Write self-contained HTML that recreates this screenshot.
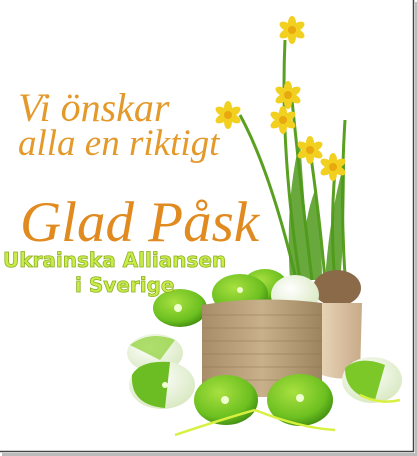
<!DOCTYPE html>
<html><head><style>
html,body{margin:0;padding:0;background:#fff;}
body{width:417px;height:456px;overflow:hidden;position:relative;}
.t{position:absolute;font-family:"Liberation Serif",serif;font-style:italic;color:#e49a2a;white-space:nowrap;}
.g{position:absolute;font-family:"DejaVu Sans",sans-serif;font-weight:bold;color:#c8ec4a;white-space:nowrap;-webkit-text-stroke:0.8px #8cb020;}
</style></head><body>
<svg width="417" height="456" style="position:absolute;left:0;top:0">
<defs>
<radialGradient id="eg" cx="0.4" cy="0.35" r="0.7"><stop offset="0" stop-color="#a8e040"/><stop offset="0.7" stop-color="#6cc020"/><stop offset="1" stop-color="#3f8a10"/></radialGradient>
<radialGradient id="ew" cx="0.4" cy="0.35" r="0.7"><stop offset="0" stop-color="#ffffff"/><stop offset="1" stop-color="#d8e8c0"/></radialGradient>
<linearGradient id="bk" x1="0" x2="1"><stop offset="0" stop-color="#a88e68"/><stop offset="0.5" stop-color="#c8b08a"/><stop offset="1" stop-color="#9c845e"/></linearGradient>
<linearGradient id="pt" x1="0" x2="1"><stop offset="0" stop-color="#e8d4b8"/><stop offset="1" stop-color="#c8ab88"/></linearGradient>
<g id="fl"><g fill="#f2d020"><ellipse cx="0" cy="-7" rx="4" ry="7"/><ellipse cx="0" cy="-7" rx="4" ry="7" transform="rotate(60)"/><ellipse cx="0" cy="-7" rx="4" ry="7" transform="rotate(120)"/><ellipse cx="0" cy="-7" rx="4" ry="7" transform="rotate(180)"/><ellipse cx="0" cy="-7" rx="4" ry="7" transform="rotate(240)"/><ellipse cx="0" cy="-7" rx="4" ry="7" transform="rotate(300)"/></g><circle r="4" fill="#e8a810"/></g>
</defs>
<rect x="0" y="0" width="413" height="451" fill="#fff"/>
<line x1="413.5" y1="0" x2="413.5" y2="452" stroke="#444" stroke-width="1.5"/>
<line x1="0" y1="451.5" x2="414" y2="451.5" stroke="#444" stroke-width="1.5"/>
<rect x="415" y="2" width="2" height="454" fill="#bbb"/><rect x="2" y="453" width="415" height="3" fill="#bbb"/>
<g stroke="#5aa020" stroke-width="3" fill="none">
<path d="M285 40 Q280 150 300 280"/><path d="M292 100 Q300 180 312 280"/><path d="M240 115 Q270 170 295 275"/>
<path d="M335 170 Q330 230 335 280"/><path d="M310 150 Q320 220 325 280"/><path d="M345 120 Q340 200 345 275"/>
</g>
<g fill="#4f9a1c" opacity="0.85">
<path d="M290 280 Q285 200 300 140 Q305 210 310 280Z"/><path d="M325 280 Q330 210 345 160 Q345 230 340 280Z"/><path d="M305 280 Q300 230 315 190 Q322 240 322 280Z"/>
</g>
<use href="#fl" x="292" y="30"/><use href="#fl" x="288" y="95"/><use href="#fl" x="283" y="120"/><use href="#fl" x="333" y="167"/><use href="#fl" x="310" y="150"/><use href="#fl" x="228" y="115"/>
<ellipse cx="337" cy="288" rx="24" ry="18" fill="#8a6a48"/>
<path d="M320 303 L362 303 L360 375 Q342 382 322 375Z" fill="url(#pt)"/>
<ellipse cx="180" cy="308" rx="27" ry="19" fill="url(#eg)"/>
<ellipse cx="265" cy="285" rx="22" ry="16" fill="url(#eg)"/>
<ellipse cx="240" cy="294" rx="28" ry="20" fill="url(#eg)"/>
<ellipse cx="295" cy="295" rx="24" ry="20" fill="url(#ew)"/>
<path d="M202 305 Q262 295 322 303 L322 392 Q262 402 202 392Z" fill="url(#bk)"/>
<g stroke="#8a7050" stroke-width="0.7" opacity="0.6">
<line x1="202" y1="315" x2="322" y2="315"/><line x1="202" y1="328" x2="322" y2="328"/><line x1="202" y1="341" x2="322" y2="341"/><line x1="202" y1="354" x2="322" y2="354"/><line x1="202" y1="367" x2="322" y2="367"/><line x1="202" y1="380" x2="322" y2="380"/>
</g>
<ellipse cx="155" cy="353" rx="28" ry="19" fill="url(#ew)"/>
<path d="M130 345 Q150 330 175 340 L160 360Z" fill="#8cd030" opacity="0.7"/>
<ellipse cx="162" cy="385" rx="33" ry="24" fill="url(#ew)"/>
<path d="M132 375 Q140 360 170 362 L165 408 Q130 405 132 375Z" fill="#6cbc24"/>
<ellipse cx="372" cy="380" rx="30" ry="23" fill="url(#ew)"/>
<path d="M345 368 Q360 355 385 365 L375 400 Q345 395 345 368Z" fill="#7cc828"/>
<ellipse cx="226" cy="400" rx="32" ry="25" fill="url(#eg)"/>
<ellipse cx="300" cy="400" rx="33" ry="26" fill="url(#eg)"/>
<g stroke="#d8f040" stroke-width="2.5" fill="none">
<path d="M175 435 Q220 420 255 410"/><path d="M255 410 Q300 428 335 430"/><path d="M360 395 Q380 405 400 400"/>
</g>
<g fill="#f0ffd0"><circle cx="225" cy="400" r="4"/><circle cx="300" cy="398" r="4"/><circle cx="178" cy="308" r="4"/><circle cx="165" cy="385" r="3"/><circle cx="240" cy="290" r="3"/></g>
</svg>
<div class="t" style="left:18px;top:84px;font-size:40px;">Vi önskar</div>
<div class="t" style="left:18px;top:122px;font-size:37px;">alla en riktigt</div>
<div class="t" style="left:20px;top:190px;font-size:57px;color:#e08a20;">Glad Påsk</div>
<div class="g" style="left:3px;top:248px;font-size:20px;">Ukrainska Alliansen</div>
<div class="g" style="left:75px;top:273px;font-size:20px;">i Sverige</div>
</body></html>
